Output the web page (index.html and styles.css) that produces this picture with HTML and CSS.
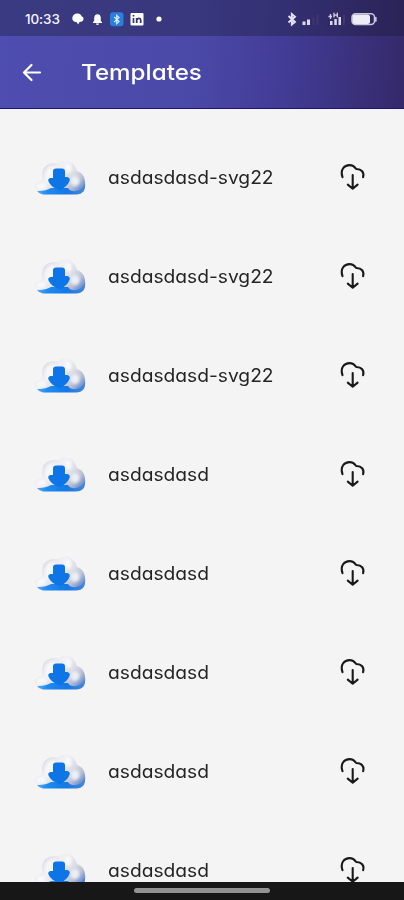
FILE: index.html
```
<!DOCTYPE html>
<html lang="en">
<head>
<meta charset="utf-8">
<title>Templates</title>
<link rel="stylesheet" href="styles.css">
</head>
<body>
<svg class="defs" width="0" height="0" aria-hidden="true">
  <defs>
    <linearGradient id="body" x1="0.1" y1="0.2" x2="1" y2=".8">
      <stop offset="0" stop-color="#d6d6dc"/><stop offset=".3" stop-color="#f0f0f5"/><stop offset=".6" stop-color="#dcdde6"/><stop offset=".8" stop-color="#b9bfd3"/><stop offset="1" stop-color="#5c86cf"/>
    </linearGradient>
    <linearGradient id="base" x1="0" y1="0" x2="1" y2="0">
      <stop offset="0" stop-color="#5aa8f4"/><stop offset=".2" stop-color="#1f8cf2"/><stop offset=".6" stop-color="#1478e6"/><stop offset="1" stop-color="#4a86da"/>
    </linearGradient>
    <filter id="soft" x="-10%" y="-10%" width="120%" height="120%"><feGaussianBlur stdDeviation=".7"/></filter>
    <filter id="haze" x="-30%" y="-30%" width="160%" height="160%"><feGaussianBlur stdDeviation="1.6"/></filter>
    <filter id="edge" x="-10%" y="-10%" width="120%" height="120%"><feGaussianBlur stdDeviation=".45"/></filter>
    <symbol id="cloud" viewBox="0 0 56 42">
      <path d="M1.500 31Q3 27 9.500 26Q7.500 14 14 10Q19 7 25 8.500Q31 3.500 37 6.500Q42 9 44 16Q49 17.500 51 22Q54 31 50 36Q48 39 43 39H9Q3 37 1.500 31Z" fill="url(#body)" filter="url(#soft)"/>
      <ellipse cx="19" cy="20" rx="7" ry="9" fill="#f7f7fb" filter="url(#haze)"/>
      <ellipse cx="8" cy="31" rx="5" ry="3" fill="#f9f9fd" filter="url(#haze)"/>
      <ellipse cx="35" cy="13" rx="3.500" ry="5" fill="#fafafc" filter="url(#haze)"/>
      <ellipse cx="42" cy="26" rx="4.500" ry="5" fill="#eeeff6" filter="url(#haze)"/>
      <path d="M4 36Q12 36.500 18 33H35Q38 37 43 36Q49 35 52 29Q53 39 43 39.500H10Q6 39 4 36Z" fill="url(#base)" filter="url(#soft)"/>
      <path d="M20 16.500Q20 13.500 23 13.500H29Q32 13.500 32 16.500V22H34Q37.500 22.500 36.500 26Q34 32 27 35Q18 32.500 15.500 26.500Q14.500 23.500 17.500 23H20Z" fill="#0875e5" filter="url(#edge)"/>
    </symbol>
    <symbol id="download" viewBox="0 0 28 30">
      <path d="M3.500 16.200C.8 8.500 5.500 4.100 10.500 4.100C13.600 4.100 15.300 5.200 17.200 8C22.500 7.800 25.500 11.500 24.100 16.200M13.700 14V27.500M8.800 23.600L13.700 27.700L18.600 23.600" fill="none" stroke="#191919" stroke-width="2.1" stroke-linecap="round" stroke-linejoin="round"/>
    </symbol>
  </defs>
</svg>
<div class="phone">
  <header class="header">
    <div class="status">
      <span class="time">10:33</span>
      <svg class="notices" viewBox="0 0 92 16" aria-hidden="true">
        <path d="M5.500 2.500C8.500 2 10.500 4 10.700 5.500C13 6 13.200 9.500 11 10.500L8.500 11L7.200 13.500L5.500 11C2.500 11 1 9 1.300 7Q1.700 3 5.500 2.500Z" fill="#fff"/>
        <path d="M22 12V11L23.200 10V7Q23.300 3.500 26.500 3.300Q29.800 3.500 29.800 7V10L31 11V12ZM25 12.500H28Q27.800 14 26.500 14Q25.200 14 25 12.500Z" fill="#fff"/>
        <rect x="39" y="1.300" width="13.500" height="14" rx="3" fill="#287fdf"/>
        <path d="M43.200 6L48 10.500L45.700 12.700V4.300L48 6.500L43.200 11" fill="none" stroke="#d8edff" stroke-width="1.200"/>
        <rect x="59.500" y="2" width="13" height="12.500" rx="1" fill="#fff"/>
        <path d="M62.500 7V12M62.500 4V5.600M65.700 12V7M65.700 9Q66.500 7.200 68.300 7.400Q69.700 7.500 69.700 9.500V12" fill="none" stroke="#34346e" stroke-width="1.700"/>
        <circle cx="88" cy="8" r="2.600" fill="#fff"/>
      </svg>
      <svg class="signals" viewBox="0 0 92 16" aria-hidden="true">
        <path d="M1.500 5L8 11L4.800 13.500V3L8 5.700L1.500 11.500" fill="none" stroke="#e4e1f5" stroke-width="1.900"/>
        <path d="M15.500 10.500H18.500V14H15.500ZM20 8.500H23V14H20Z" fill="#ddd9ef"/>
        <path d="M25.500 6H27.500V14H25.500ZM29.500 3.500H31.500V14H29.500Z" fill="#40376d"/>
        <path d="M43 10H45.500V14H43ZM47.300 8H49.800V14H47.300ZM51.500 6H54V14H51.500Z" fill="#ddd9ef"/>
        <path d="M56 3.500H58V14H56Z" fill="#40376d"/>
        <path d="M43.500 3V8M41.500 5.500H45M47 1.800V6.500M50.300 1.800V6.500M47 4.200H50.300" stroke="#d8d3ea" stroke-width="1.300" fill="none"/>
        <rect x="65" y="2.800" width="22.500" height="10.800" rx="3.500" fill="none" stroke="#c9c5da" stroke-width="1.500"/>
        <rect x="65.500" y="3.500" width="17.500" height="9.400" rx="2.500" fill="#eeecf5"/>
        <path d="M88.800 6.500V10" stroke="#c9c5da" stroke-width="1.700" stroke-linecap="round"/>
      </svg>
    </div>
    <div class="bar">
      <svg class="back" viewBox="0 0 20 20" aria-label="Back"><path d="M18 10.500H2.500M9.500 3L2 10.500L9.500 18" fill="none" stroke="#fff" stroke-width="2.200" stroke-linecap="round" stroke-linejoin="round"/></svg>
      <h1 class="title">Templates</h1>
    </div>
  </header>
  <main class="list">
    <div class="row"><svg class="cloud"><use href="#cloud"/></svg><span class="name">asdasdasd-svg22</span><svg class="download"><use href="#download"/></svg></div>
    <div class="row"><svg class="cloud"><use href="#cloud"/></svg><span class="name">asdasdasd-svg22</span><svg class="download"><use href="#download"/></svg></div>
    <div class="row"><svg class="cloud"><use href="#cloud"/></svg><span class="name">asdasdasd-svg22</span><svg class="download"><use href="#download"/></svg></div>
    <div class="row"><svg class="cloud"><use href="#cloud"/></svg><span class="name">asdasdasd</span><svg class="download"><use href="#download"/></svg></div>
    <div class="row"><svg class="cloud"><use href="#cloud"/></svg><span class="name">asdasdasd</span><svg class="download"><use href="#download"/></svg></div>
    <div class="row"><svg class="cloud"><use href="#cloud"/></svg><span class="name">asdasdasd</span><svg class="download"><use href="#download"/></svg></div>
    <div class="row"><svg class="cloud"><use href="#cloud"/></svg><span class="name">asdasdasd</span><svg class="download"><use href="#download"/></svg></div>
    <div class="row"><svg class="cloud"><use href="#cloud"/></svg><span class="name">asdasdasd</span><svg class="download"><use href="#download"/></svg></div>
  </main>
  <footer class="nav"><div class="handle"></div></footer>
</div>
</body>
</html>
```
FILE: styles.css
```
* { box-sizing: border-box; }
body { margin: 0; font-family: Inter, "Open Sans", sans-serif; font-feature-settings: "cv11" 1; }
.defs { display: block; }
.phone { width: 404px; height: 900px; display: flex; flex-direction: column; overflow: hidden; background: #f4f4f4; }
.header { flex: none; height: 109px; background: linear-gradient(95deg, #4e4eb0 0%, #4b49a8 48%, #423c96 70%, #35296a 100%); border-bottom: 1px solid #1d1378; }
.status { height: 36px; display: flex; align-items: center; padding: 1px 25px 0; background: rgba(24, 24, 50, .36); color: #f6f5ff; }
.time { width: 46px; font-size: 13.500px; font-weight: 500; letter-spacing: -.1px; white-space: nowrap; }
.notices { width: 92px; height: 16px; }
.signals { width: 92px; height: 16px; margin-left: auto; }
.bar { height: 72px; display: flex; align-items: center; padding-left: 22px; }
.back { width: 20px; height: 20px; }
.title { margin: 0 0 0 39px; color: #fff; font-size: 22px; font-weight: 500; line-height: 32px; transform: scaleX(1.1); transform-origin: left; }
.list { flex: 1; min-height: 0; overflow: hidden; padding-top: 19px; }
.row { height: 99px; display: flex; align-items: center; padding: 0 37px 0 33px; }
.cloud { width: 56px; height: 42px; flex: none; margin-top: -3px; }
.name { margin-left: 19px; font-size: 18px; line-height: 26px; color: #242424; transform: scaleX(1.067); transform-origin: left; }
.download { width: 28px; height: 30px; margin-left: auto; flex: none; margin-top: -4px; }
.nav { flex: none; height: 18px; display: flex; justify-content: center; padding-top: 6px; background: #171717; }
.handle { width: 136px; height: 5px; border-radius: 3px; background: #929292; }
```
